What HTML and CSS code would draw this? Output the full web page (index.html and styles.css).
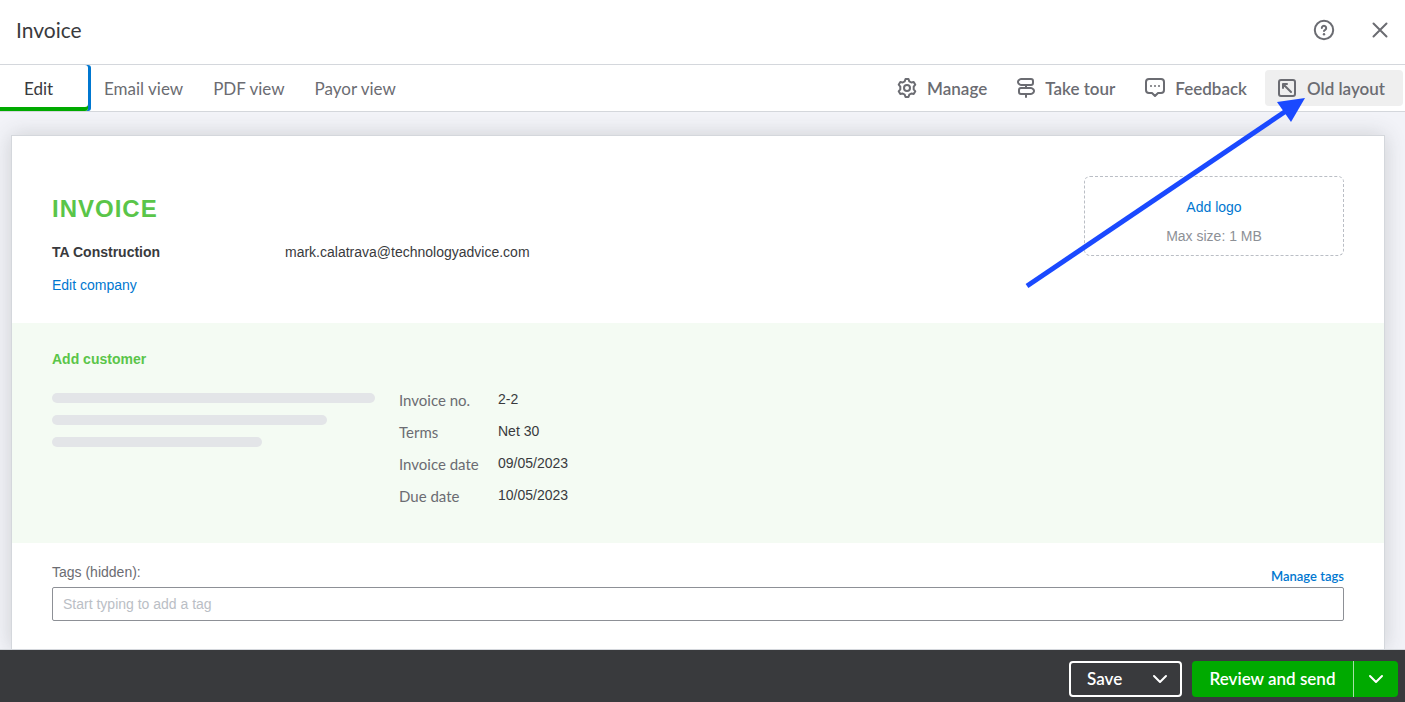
FILE: index.html
```html
<!DOCTYPE html>
<html lang="en">
<head>
    <meta charset="UTF-8">
    <meta name="viewport" content="width=device-width, initial-scale=1.0">
    <title>Invoice</title>
    <link rel="stylesheet" href="styles.css">
</head>
<body>

    <header class="page-header">
        <h1>Invoice</h1>
        <div class="header-actions">
            <button type="button" class="icon-btn" aria-label="Help">
                <svg width="24" height="24" viewBox="0 0 24 24">
                    <circle cx="12" cy="12" r="9.2"/>
                    <path d="M9.8 10.1a2.2 2.2 0 1 1 3.4 1.8c-.8.5-1.2.8-1.2 1.2"/>
                    <circle class="dot" cx="12" cy="16.2" r="1.2"/>
                </svg>
            </button>
            <button type="button" class="icon-btn" aria-label="Close">
                <svg width="24" height="24" viewBox="0 0 24 24">
                    <path d="M5.5 5.5l13 13M18.5 5.5l-13 13"/>
                </svg>
            </button>
        </div>
    </header>

    <div class="toolbar">
        <nav class="tabs">
            <button type="button" class="tab active">Edit</button>
            <button type="button" class="tab">Email view</button>
            <button type="button" class="tab">PDF view</button>
            <button type="button" class="tab">Payor view</button>
        </nav>

        <div class="tools">
            <button type="button" class="tool">
                <svg width="20" height="20" viewBox="0 0 20 20">
                    <circle cx="10" cy="10" r="3"/>
                    <path d="M8.5 1h3l.8 2.3 2 1.2 2.4-.5 1.6 2.7L16.700 8.600v2.800l1.600 1.900-1.600 2.700-2.400-.5-2 1.200-.8 2.300h-3l-.8-2.300-2-1.200-2.400.5-1.600-2.700 1.600-1.900V8.600L1.700 6.700 3.300 4l2.400.5 2-1.200z"/>
                </svg>
                Manage
            </button>
            <button type="button" class="tool">
                <svg width="18" height="20" viewBox="0 0 18 20">
                    <path d="M4 1h10a2 2 0 0 1 2 2v2a2 2 0 0 1-2 2H4Q3 7 1.500 5.500Q.5 4 1.500 2.500Q3 1 4 1z"/>
                    <path d="M14 10H4a2 2 0 0 0-2 2v2a2 2 0 0 0 2 2h10q1 0 2.500-1.500q1-1.500 0-3Q15 10 14 10z"/>
                    <path d="M9 7v3M9 16v3"/>
                </svg>
                Take tour
            </button>
            <button type="button" class="tool">
                <svg width="20" height="20" viewBox="0 0 20 20">
                    <path d="M4 1h12a3 3 0 0 1 3 3v8a3 3 0 0 1-3 3h-3l-3 3-3-3H4a3 3 0 0 1-3-3V4a3 3 0 0 1 3-3z"/>
                    <circle class="dot" cx="6" cy="8" r="1"/>
                    <circle class="dot" cx="10" cy="8" r="1"/>
                    <circle class="dot" cx="14" cy="8" r="1"/>
                </svg>
                Feedback
            </button>
            <button type="button" class="tool selected">
                <svg width="20" height="20" viewBox="0 0 20 20">
                    <rect x="2" y="2" width="16" height="16" rx="2"/>
                    <path d="M14 14L6 6M6 10V6h4"/>
                </svg>
                Old layout
            </button>
        </div>

        <!-- arrow pointing at the old layout button -->
        <svg class="pointer" width="290" height="200" viewBox="0 0 290 200">
            <path class="shaft" d="M7 196L266 21"/>
            <path class="head" d="M285 8L257 12L271 32z"/>
        </svg>
    </div>

    <main>
        <div class="sheet">
            <section class="company">
                <div>
                    <h2>INVOICE</h2>
                    <div class="company-row">
                        <strong>TA Construction</strong>
                        <span>mark.calatrava@technologyadvice.com</span>
                    </div>
                    <a href="#">Edit company</a>
                </div>
                <div class="logo-box">
                    <a href="#">Add logo</a>
                    <span>Max size: 1 MB</span>
                </div>
            </section>

            <section class="customer">
                <a href="#" class="add-customer">Add customer</a>
                <div class="customer-row">
                    <div class="skeleton">
                        <div class="line line-long"></div>
                        <div class="line line-medium"></div>
                        <div class="line line-short"></div>
                    </div>
                    <dl class="details">
                        <dt>Invoice no.</dt>
                        <dd>2-2</dd>
                        <dt>Terms</dt>
                        <dd>Net 30</dd>
                        <dt>Invoice date</dt>
                        <dd>09/05/2023</dd>
                        <dt>Due date</dt>
                        <dd>10/05/2023</dd>
                    </dl>
                </div>
            </section>

            <section class="tags">
                <div class="tags-top">
                    <label for="tags">Tags (hidden):</label>
                    <a href="#">Manage tags</a>
                </div>
                <input type="text" id="tags" placeholder="Start typing to add a tag">
            </section>
        </div>
    </main>

    <footer>
        <button type="button" class="save-btn">
            Save
            <svg width="16" height="16" viewBox="0 0 16 16"><path d="M2 5l6 6 6-6"/></svg>
        </button>
        <div class="send-group">
            <button type="button" class="send-btn">Review and send</button>
            <button type="button" class="send-more" aria-label="More send options">
                <svg width="16" height="16" viewBox="0 0 16 16"><path d="M2 5l6 6 6-6"/></svg>
            </button>
        </div>
    </footer>

</body>
</html>
```

FILE: styles.css
```css
* {
    box-sizing: border-box;
}

body {
    display: flex;
    flex-direction: column;
    height: 100vh;
    margin: 0;
    overflow: hidden;
    font-family: "Liberation Sans", Arial, sans-serif;
    font-size: 14px;
    line-height: 20px;
    color: #393a3d;
    background-color: #f2f3f8;
}

a {
    color: #0077d0;
    text-decoration: none;
}

button {
    margin: 0;
    padding: 0;
    border: none;
    background: none;
    font-family: Lato, sans-serif;
    font-size: 17px;
    color: #6b6c72;
    cursor: pointer;
}

svg {
    fill: none;
    stroke: currentColor;
    stroke-width: 2;
    stroke-linecap: round;
    stroke-linejoin: round;
}

.dot {
    fill: currentColor;
    stroke: none;
}

/* header */
.page-header {
    display: flex;
    flex-shrink: 0;
    align-items: center;
    justify-content: space-between;
    height: 65px;
    padding: 0 13px 4px 16px;
    border-bottom: 1px solid #d4d7dc;
    background-color: #fff;
}

.page-header h1 {
    margin: 0;
    font-family: Lato, sans-serif;
    font-size: 21px;
    font-weight: 400;
}

.header-actions {
    display: flex;
    gap: 32px;
}

.icon-btn svg {
    display: block;
}

/* tabs and tools */
.toolbar {
    position: relative;
    display: flex;
    flex-shrink: 0;
    justify-content: space-between;
    height: 47px;
    border-bottom: 1px solid #d4d7dc;
    background-color: #fff;
}

.tabs {
    display: flex;
}

.tab {
    padding: 0 14px 0 16px;
}

.tab.active {
    width: 88px;
    padding: 0 24px;
    border-radius: 0 3px 3px 0;
    text-align: left;
    color: #393a3d;
    box-shadow: inset 0 -4px #0a0, 3px 0 #0077d0;
}

.tools {
    display: flex;
    align-items: center;
    padding-right: 2px;
}

.tool {
    display: flex;
    align-items: center;
    gap: 10px;
    height: 36px;
    padding: 0 18px 0 12px;
    border-radius: 4px;
    font-weight: 600;
}

.tool.selected {
    background-color: #efefef;
}

.pointer {
    position: absolute;
    top: 25px;
    right: 95px;
    z-index: 2;
    color: #1a49ff;
    pointer-events: none;
}

.pointer .shaft {
    stroke-width: 5;
    stroke-linecap: butt;
}

.pointer .head {
    fill: currentColor;
    stroke: none;
}

/* invoice sheet */
main {
    flex: 1;
    min-height: 0;
    overflow: auto;
    padding: 23px 20px 0 11px;
}

.sheet {
    min-height: 100%;
    border: 1px solid #d4d7dc;
    border-bottom: none;
    background-color: #fff;
    box-shadow: 0 0 20px rgba(57, 58, 61, 0.2);
}

.company {
    display: flex;
    justify-content: space-between;
    padding: 40px 40px 28px;
}

.company h2 {
    margin: 19px 0;
    font-size: 24px;
    line-height: 28px;
    letter-spacing: 1px;
    color: #5ac549;
}

.company-row {
    display: grid;
    grid-template-columns: 233px auto;
    margin-bottom: 13px;
}

.logo-box {
    display: flex;
    flex-direction: column;
    gap: 9px;
    align-items: center;
    width: 260px;
    height: 80px;
    padding-top: 20px;
    border: 1px dashed #babec5;
    border-radius: 6px;
    color: #8d9096;
}

.customer {
    padding: 26px 40px 38px;
    background-color: #f4fbf3;
}

.add-customer {
    font-weight: 700;
    color: #5ac549;
}

.customer-row {
    display: flex;
    gap: 24px;
    margin-top: 20px;
}

.skeleton {
    display: flex;
    flex-direction: column;
    gap: 12px;
    width: 323px;
    padding-top: 4px;
}

.line {
    height: 10px;
    border-radius: 5px;
    background-color: #e3e5e8;
}

.line-long {
    width: 100%;
}

.line-medium {
    width: 85%;
}

.line-short {
    width: 65%;
}

.details {
    display: grid;
    grid-template-columns: 99px auto;
    row-gap: 12px;
    margin: 0;
}

.details dt {
    padding-top: 2px;
    font-family: Lato, sans-serif;
    font-size: 15px;
    line-height: 18px;
    color: #6b6c72;
}

.details dd {
    margin: 0;
}

.tags {
    padding: 19px 40px 28px;
}

.tags-top {
    display: flex;
    align-items: flex-start;
    justify-content: space-between;
    height: 25px;
    color: #6b6c72;
}

.tags-top a {
    padding-top: 4px;
    font-family: Lato, sans-serif;
    font-size: 13px;
    font-weight: 600;
}

.tags input {
    display: block;
    width: 100%;
    height: 34px;
    padding: 0 10px;
    border: 1px solid #8d9096;
    border-radius: 2px;
    font-family: inherit;
    font-size: 14px;
}

.tags input::placeholder {
    color: #babec5;
}

/* bottom bar */
footer {
    position: relative;
    display: flex;
    flex-shrink: 0;
    gap: 10px;
    align-items: center;
    justify-content: flex-end;
    height: 53px;
    padding: 5px 7px 0 0;
    border-top: 1px solid #d4d7dc;
    background-color: #393a3d;
}

footer button {
    height: 36px;
    font-weight: 600;
    color: #fff;
}

.save-btn {
    display: flex;
    align-items: center;
    justify-content: space-between;
    width: 113px;
    padding: 0 12px 0 16px;
    border: 2px solid #fff;
    border-radius: 4px;
}

.send-group {
    display: flex;
    border-radius: 4px;
    background-color: #0a0;
}

.send-btn {
    width: 161px;
}

.send-more {
    display: flex;
    align-items: center;
    justify-content: center;
    width: 45px;
    border-left: 1px solid #a6e0a6;
}
```
